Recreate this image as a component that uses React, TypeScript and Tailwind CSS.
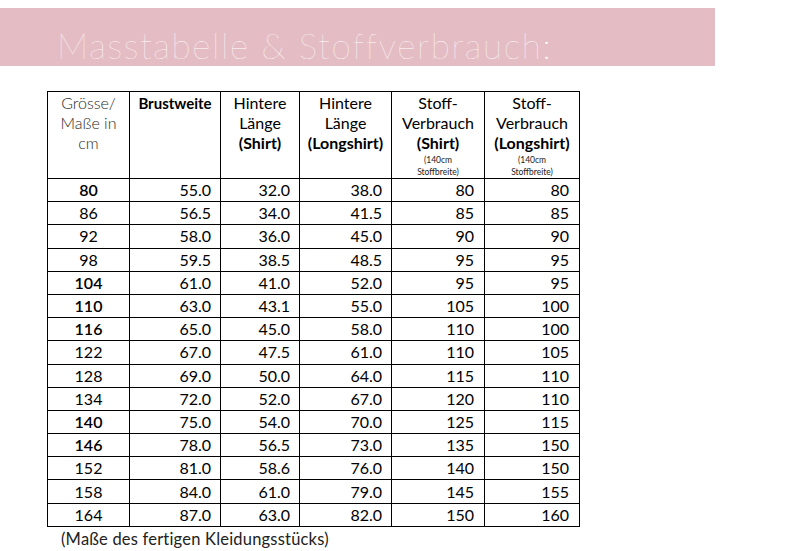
import React from "react";

const rows: [string, string, string, string, string, string, boolean][] = [
  ["80", "55.0", "32.0", "38.0", "80", "80", true],
  ["86", "56.5", "34.0", "41.5", "85", "85", false],
  ["92", "58.0", "36.0", "45.0", "90", "90", false],
  ["98", "59.5", "38.5", "48.5", "95", "95", false],
  ["104", "61.0", "41.0", "52.0", "95", "95", true],
  ["110", "63.0", "43.1", "55.0", "105", "100", true],
  ["116", "65.0", "45.0", "58.0", "110", "100", true],
  ["122", "67.0", "47.5", "61.0", "110", "105", false],
  ["128", "69.0", "50.0", "64.0", "115", "110", false],
  ["134", "72.0", "52.0", "67.0", "120", "110", false],
  ["140", "75.0", "54.0", "70.0", "125", "115", true],
  ["146", "78.0", "56.5", "73.0", "135", "150", true],
  ["152", "81.0", "58.6", "76.0", "140", "150", false],
  ["158", "84.0", "61.0", "79.0", "145", "155", false],
  ["164", "87.0", "63.0", "82.0", "150", "160", false],
];

export default function App() {
  return (
    <div
      className="w-[785px] h-[551px] bg-white overflow-hidden text-black"
      style={{ fontFamily: "Lato, 'Open Sans', sans-serif" }}
    >
      <div className="mt-[8px] w-[715px] h-[58px] bg-[#e4bdc4] flex items-center pl-[57px]">
        <span className="text-white text-[35px] font-thin leading-none tracking-[1.7px] pt-[16px]">
          Masstabelle &amp; Stoffverbrauch:
        </span>
      </div>
      <div className="ml-[47px] mt-[25px]">
        <table className="border-collapse border border-black text-[16px]">
          <colgroup>
            <col className="w-[82px]" />
            <col className="w-[91px]" />
            <col className="w-[79px]" />
            <col className="w-[92px]" />
            <col className="w-[93px]" />
            <col className="w-[95px]" />
          </colgroup>
          <thead>
            <tr className="h-[85px]">
              <th className="border border-black align-top font-light text-[#2a2a2a] leading-[20px] pt-[1px] px-1">
                Grösse/
                <br />
                Maße in
                <br />
                cm
              </th>
              <th className="border border-black align-top font-bold text-[15px] leading-[20px] pt-[1px] px-1">
                Brustweite
              </th>
              <th className="border border-black align-top font-normal leading-[20px] pt-[1px] px-1">
                Hintere
                <br />
                Länge
                <br />
                <span className="font-bold">(Shirt)</span>
              </th>
              <th className="border border-black align-top font-normal leading-[20px] pt-[1px] px-1">
                Hintere
                <br />
                Länge
                <br />
                <span className="font-bold">(Longshirt)</span>
              </th>
              <th className="border border-black align-top font-normal leading-[20px] pt-[1px] px-1">
                Stoff-
                <br />
                Verbrauch
                <br />
                <span className="font-bold">(Shirt)</span>
                <div className="text-[8.5px] leading-[12px] pt-[1px] text-[#222]">
                  (140cm
                  <br />
                  Stoffbreite)
                </div>
              </th>
              <th className="border border-black align-top font-normal leading-[20px] pt-[1px] px-1">
                Stoff-
                <br />
                Verbrauch
                <br />
                <span className="font-bold">(Longshirt)</span>
                <div className="text-[8.5px] leading-[12px] pt-[1px] text-[#222]">
                  (140cm
                  <br />
                  Stoffbreite)
                </div>
              </th>
            </tr>
          </thead>
          <tbody>
            {rows.map((r) => (
              <tr key={r[0]} className="h-[23.2px]">
                <td
                  className={
                    "border border-black text-center leading-[22px] p-0 " +
                    (r[6] ? "font-semibold" : "font-normal")
                  }
                >
                  {r[0]}
                </td>
                <td className="border border-black text-right leading-[22px] py-0 pr-[9px]">{r[1]}</td>
                <td className="border border-black text-right leading-[22px] py-0 pr-[9px]">{r[2]}</td>
                <td className="border border-black text-right leading-[22px] py-0 pr-[9px]">{r[3]}</td>
                <td className="border border-black text-right leading-[22px] py-0 pr-[10px]">{r[4]}</td>
                <td className="border border-black text-right leading-[22px] py-0 pr-[10px]">{r[5]}</td>
              </tr>
            ))}
          </tbody>
        </table>
      </div>
      <div className="ml-[61px] mt-[2px] text-[16.5px] leading-[20px] text-[#222] tracking-[0.2px]">
        (Maße des fertigen Kleidungsstücks)
      </div>
    </div>
  );
}
